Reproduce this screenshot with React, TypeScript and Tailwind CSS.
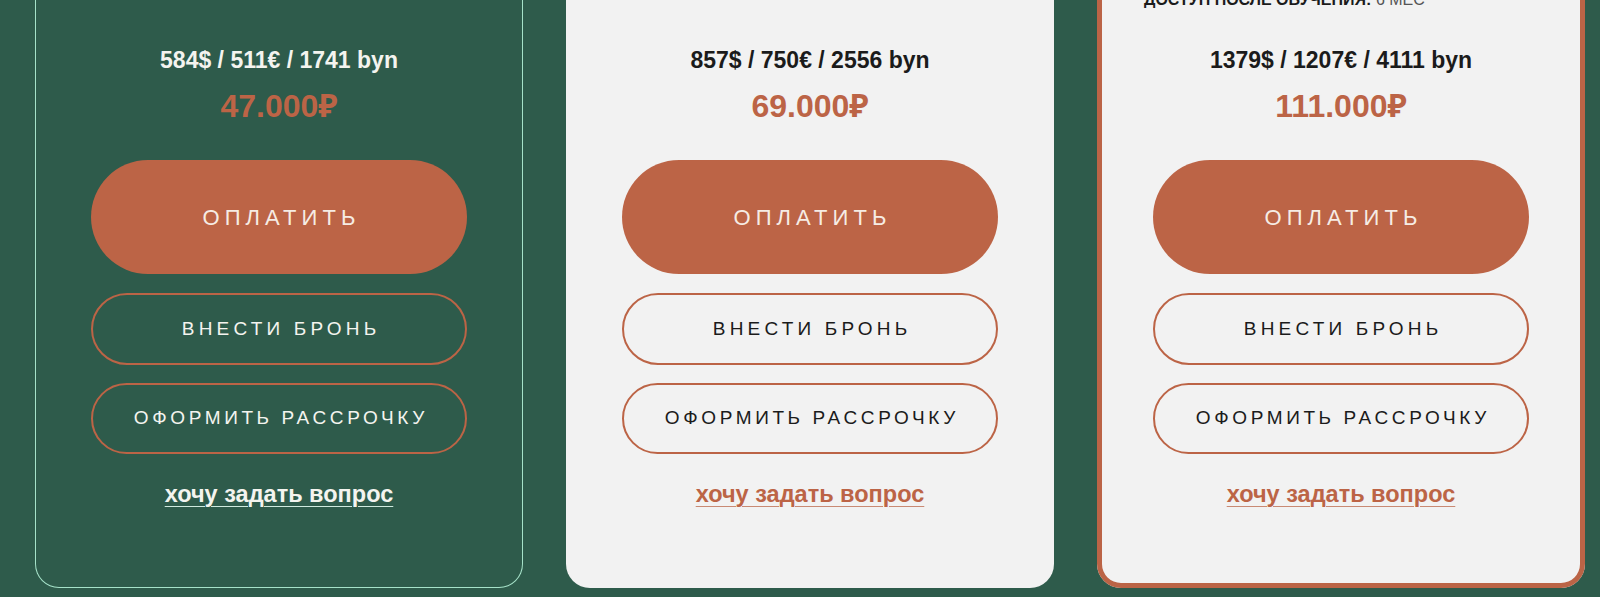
import React from 'react';

type Plan = {
  usd: string;
  eur: string;
  byn: string;
  rub: string;
  variant: 'dark' | 'light' | 'accent';
  access?: string;
};

const plans: Plan[] = [
  { usd: '584$', eur: '511€', byn: '1741 byn', rub: '47.000₽', variant: 'dark' },
  { usd: '857$', eur: '750€', byn: '2556 byn', rub: '69.000₽', variant: 'light' },
  { usd: '1379$', eur: '1207€', byn: '4111 byn', rub: '111.000₽', variant: 'accent', access: '6 МЕС' },
];

const font = { fontFamily: '"Liberation Sans", Arial, "Noto Sans", sans-serif' };

function PlanCard({ plan }: { plan: Plan }) {
  const dark = plan.variant === 'dark';

  const cardCls =
    plan.variant === 'dark'
      ? 'bg-[#2e5b4b] shadow-[inset_0_0_0_1px_#a6e2c9]'
      : plan.variant === 'accent'
        ? 'bg-[#f2f2f2] shadow-[inset_0_0_0_5px_#bb6446]'
        : 'bg-[#f2f2f2]';

  const textCls = dark ? 'text-[#f4f4ef]' : 'text-[#1b1b1b]';

  return (
    <div className={`w-[488px] shrink-0 rounded-[24px] flex flex-col items-center pb-[80px] ${cardCls}`}>
      {/* bottom of the feature list */}
      <div className="h-[145px] w-full flex items-end px-[47px] pb-[33px]">
        {plan.access && (
          <p className="text-[16px] leading-[24px] text-[#1b1b1b] uppercase">
            <span className="font-bold">Доступ после обучения:</span>{' '}
            <span className="text-[#555]">{plan.access}</span>
          </p>
        )}
      </div>

      <p className={`text-[23px] leading-[30px] font-bold ${textCls}`}>
        {plan.usd} / {plan.eur} / {plan.byn}
      </p>
      <p className="mt-[12px] text-[32px] leading-[38px] font-bold text-[#bc6446]">{plan.rub}</p>

      <button className="mt-[35px] w-[376px] h-[114px] rounded-full bg-[#bc6446] text-[#f6ece4] text-[22px] tracking-[0.23em] pl-[0.23em]">
        ОПЛАТИТЬ
      </button>
      <button
        className={`mt-[19px] w-[376px] h-[72px] rounded-full border-2 border-[#bc6446] text-[19px] tracking-[0.22em] pl-[0.22em] ${textCls}`}
      >
        ВНЕСТИ БРОНЬ
      </button>
      <button
        className={`mt-[18px] w-[376px] h-[71px] rounded-full border-2 border-[#bc6446] text-[19px] tracking-[0.19em] pl-[0.19em] ${textCls}`}
      >
        ОФОРМИТЬ РАССРОЧКУ
      </button>

      <a
        href="#"
        className={`mt-[26px] text-[23.5px] leading-[28px] font-bold underline underline-offset-[4px] decoration-1 ${
          dark ? 'text-[#f4f4ef] decoration-[#cfeadf]' : 'text-[#bc6446] decoration-[#c98a74]'
        }`}
      >
        хочу задать вопрос
      </a>
    </div>
  );
}

export default function App() {
  return (
    <div className="w-[1600px] h-[597px] overflow-hidden bg-[#2e5b4b]" style={font}>
      <div className="-mt-[100px] pl-[35px] flex gap-[43px]">
        {plans.map((p) => (
          <PlanCard key={p.rub} plan={p} />
        ))}
      </div>
    </div>
  );
}
